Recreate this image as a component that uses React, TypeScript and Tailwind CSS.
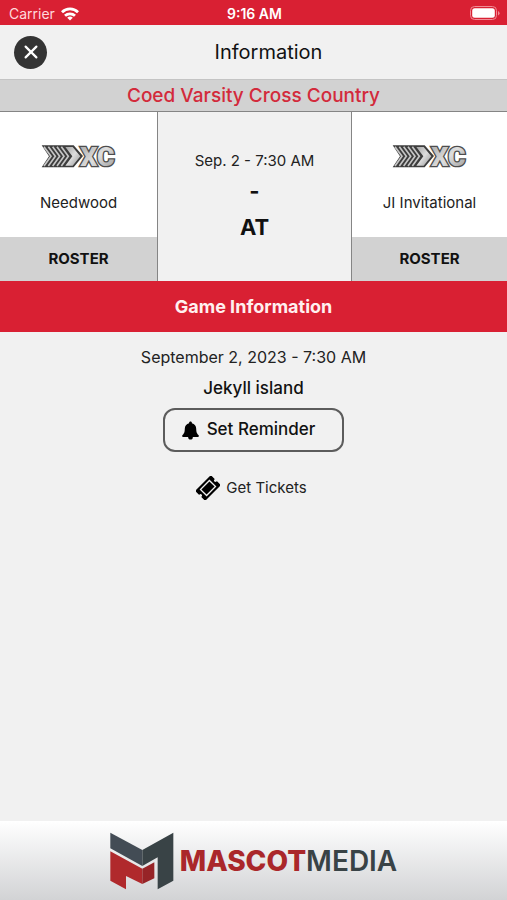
import React from 'react';

const CrossCountryLogo = ({ id }: { id: string }) => (
  <svg viewBox="36 24 225 78" className="w-[75px] h-[26px] overflow-visible" role="img" aria-label="Cross country">
    <defs>
      <linearGradient id={id} x1="0" y1="0" x2="1" y2="1">
        <stop offset="0" stopColor="#a5a5a5" />
        <stop offset="0.5" stopColor="#dedede" />
        <stop offset="1" stopColor="#949494" />
      </linearGradient>
    </defs>
    <path d="M38 31H134L162 63L134 97H38L60 64Z" fill="#3d3d3d" />
    {[45, 58, 71, 84, 97].map(x => (
      <path key={x} d={`M${x} 35L${x + 21} 64L${x} 93`} fill="none" stroke="#c6c6c6" strokeWidth="5" />
    ))}
    <path d="M109 36H131L154 64L131 92H109L130 64Z" fill={`url(#${id})`} />
    <text
      x="154"
      y="93"
      fontFamily="Roboto, sans-serif"
      fontWeight="900"
      fontSize="80"
      fill={`url(#${id})`}
      stroke="#4d4d4d"
      strokeWidth="8"
      paintOrder="stroke"
    >
      XC
    </text>
  </svg>
);

const MascotMark = () => (
  <svg viewBox="60 66 192 174" className="w-16 h-[58px]" aria-hidden="true">
    <path d="M61 68L157 120V168L61 115Z" fill="#434c55" />
    <path d="M157 120L250 68V212L203 238V142L157 168Z" fill="#394346" />
    <path d="M61 124L157 176V222L108 198V238L61 212Z" fill="#b0292c" />
    <path d="M157 176L193 157V205L157 222Z" fill="#972427" />
  </svg>
);

const StatusBar = () => (
  <div className="grid grid-cols-3 items-center h-[25px] pl-[9px] pr-[7px] bg-[#d92033] text-white text-sm leading-5">
    <div className="flex items-center gap-[6px] pt-[2px]">
      <span className="text-[#ffd9dc]">Carrier</span>
      <svg viewBox="0 0 18 14" className="w-[18px] h-[14px]" fill="none" stroke="currentColor" strokeWidth="2.8" aria-hidden="true">
        <path d="M1 5.2A11.5 11.5 0 0 1 17 5.2" />
        <path d="M4 8.8A7.2 7.2 0 0 1 14 8.8" />
        <path d="M9 13.6L6.2 10.8A4 4 0 0 1 11.8 10.8Z" fill="currentColor" stroke="none" />
      </svg>
    </div>
    <span className="text-center font-semibold pt-[2px]">9:16 AM</span>
    <svg viewBox="0 0 30 14" className="w-[30px] h-[14px] justify-self-end" aria-hidden="true">
      <rect x="0.5" y="0.5" width="26" height="13" rx="4" fill="none" stroke="#f08b95" />
      <rect x="2.2" y="2.2" width="22.6" height="9.6" rx="2.5" fill="#fff" />
      <path d="M28 5V9.4Q29.6 8.6 29.6 7.2T28 5Z" fill="#f08b95" />
    </svg>
  </div>
);

const TeamPanel = ({ name, logoId }: { name: string; logoId: string }) => (
  <div className="flex flex-col bg-white">
    <div className="flex flex-col items-center h-[125px] pt-[31px] gap-[22px]">
      <CrossCountryLogo id={logoId} />
      <span className="text-[15px] leading-6 text-[#222222]">{name}</span>
    </div>
    <button className="h-11 bg-[#d2d2d2] text-[15px] font-bold">ROSTER</button>
  </div>
);

export default function App() {
  return (
    <div className="flex flex-col min-h-screen bg-[#f1f1f1] text-[#111111] font-['Inter',sans-serif]">
      <StatusBar />

      <header className="grid grid-cols-[48px_1fr_32px] items-center h-[54px] pl-[14px]">
        <button
          aria-label="Close"
          className="flex items-center justify-center w-[33px] h-[33px] rounded-full bg-[#343434] text-white"
        >
          <svg viewBox="0 0 14 14" className="w-[14px] h-[14px]" stroke="currentColor" strokeWidth="2.2" strokeLinecap="round" aria-hidden="true">
            <path d="M1.6 1.6L12.4 12.4M12.4 1.6L1.6 12.4" />
          </svg>
        </button>
        <h1 className="text-center text-xl">Information</h1>
      </header>

      <h2 className="h-[33px] border-t border-[#c4c4c4] border-b border-b-[#858585] bg-[#d2d2d2] text-center text-[19px] leading-8 font-medium text-[#d32a3b]">
        Coed Varsity Cross Country
      </h2>

      <section className="grid grid-cols-[157fr_195fr_155fr]">
        <TeamPanel name="Needwood" logoId="home-shine" />
        <div className="flex flex-col items-center border-x border-[#858585] pt-[37px]">
          <span className="text-[15px] leading-6 text-[#222222]">Sep. 2 - 7:30 AM</span>
          <span className="text-[22px] leading-9 font-bold">-</span>
          <span className="text-[22px] leading-9 font-bold">AT</span>
        </div>
        <TeamPanel name="JI Invitational" logoId="away-shine" />
      </section>

      <h3 className="bg-[#d92033] text-center text-lg leading-[51px] font-bold text-[#fff0f0]">Game Information</h3>

      <main className="flex flex-1 flex-col items-center pt-[10px]">
        <p className="text-base leading-[30px] text-[#222222]">September 2, 2023 - 7:30 AM</p>
        <p className="text-[17px] leading-8 font-medium">Jekyll island</p>
        <button className="flex items-center gap-2 h-11 mt-1 pl-[17px] pr-[27px] rounded-xl border-2 border-[#5c5c5c] text-[17px] font-medium">
          <svg viewBox="0 0 17 19" className="w-[17px] h-[19px]" fill="#000" aria-hidden="true">
            <path d="M8.5 0.5C9.3 0.5 9.9 1.1 9.9 1.9V2.3C12.6 2.9 14.2 5 14.2 7.7C14.2 11.6 15.3 12.8 16.5 14.1C17.2 15 16.7 16.1 15.6 16.1H1.4C0.3 16.1 -0.2 15 0.5 14.1C1.7 12.8 2.8 11.6 2.8 7.7C2.8 5 4.4 2.9 7.1 2.300V1.900C7.100 1.100 7.700 0.500 8.500 0.500Z" />
            <path d="M6.100 16H10.900C10.900 17.600 9.900 18.600 8.500 18.600S6.100 17.600 6.100 16Z" />
          </svg>
          Set Reminder
        </button>
        <a href="#tickets" className="flex items-center gap-[6px] mt-6 pr-1 text-[15px] leading-6 text-[#222222]">
          <svg viewBox="0 0 24 24" className="w-6 h-6" aria-hidden="true">
            <g transform="rotate(-45 12 12)">
              <path d="M1.5 5.5H22.5V10A2 2 0 0 0 22.5 14V18.5H1.5V14A2 2 0 0 0 1.5 10Z" fill="#000" stroke="#000" strokeWidth="1.2" strokeLinejoin="round" />
              <rect x="5.7" y="7.7" width="12.6" height="8.6" fill="none" stroke="#f1f1f1" strokeWidth="1.3" />
            </g>
          </svg>
          Get Tickets
        </a>
      </main>

      <footer className="flex items-center justify-center gap-[6px] h-[79px] bg-linear-to-b from-white to-[#d2d3d5]">
        <MascotMark />
        <div className="flex text-[28px] leading-8">
          <span className="font-extrabold text-[#aa272a]">MASCOT</span>
          <span className="font-semibold text-[#394346]">MEDIA</span>
        </div>
      </footer>
    </div>
  );
}
